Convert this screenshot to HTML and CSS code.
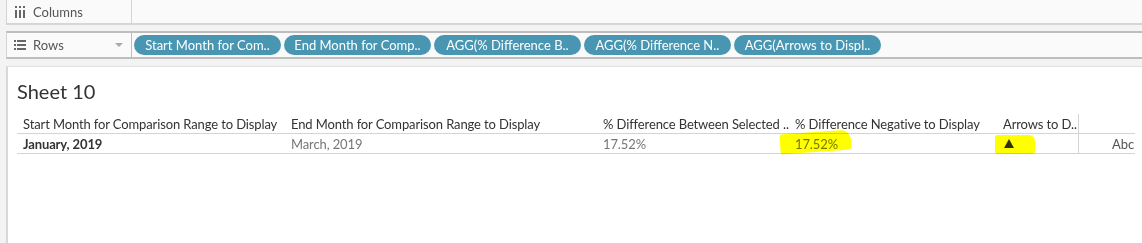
FILE: index.html
```html
<!DOCTYPE html>
<html lang="en">
<head>
  <meta charset="UTF-8" />
  <title>Sheet 10</title>
  <link rel="stylesheet" href="styles.css">
</head>
<body>
  <div class="shelf shelf-columns">
    <div class="shelf-label">
      <svg class="shelf-icon" width="12" height="12" viewBox="0 0 12 12">
        <rect x="1" y="0" width="2" height="2" fill="#666"/>
        <rect x="5" y="0" width="2" height="2" fill="#666"/>
        <rect x="9" y="0" width="2" height="2" fill="#666"/>
        <rect x="1" y="4" width="2" height="8" fill="#666"/>
        <rect x="5" y="4" width="2" height="8" fill="#666"/>
        <rect x="9" y="4" width="2" height="8" fill="#666"/>
      </svg>
      Columns
    </div>
    <div class="shelf-drop"></div>
  </div>

  <div class="shelf shelf-rows">
    <div class="shelf-label">
      <svg class="shelf-icon" width="12" height="12" viewBox="0 0 12 12">
        <rect x="0" y="1" width="2" height="2" fill="#666"/>
        <rect x="0" y="5" width="2" height="2" fill="#666"/>
        <rect x="0" y="9" width="2" height="2" fill="#666"/>
        <rect x="3" y="1" width="9" height="2" fill="#666"/>
        <rect x="3" y="5" width="9" height="2" fill="#666"/>
        <rect x="3" y="9" width="9" height="2" fill="#666"/>
      </svg>
      Rows
      <span class="caret"></span>
    </div>
    <div class="shelf-drop">
      <span class="pill">Start Month for Com..</span>
      <span class="pill">End Month for Comp..</span>
      <span class="pill">AGG(% Difference B..</span>
      <span class="pill">AGG(% Difference N..</span>
      <span class="pill">AGG(Arrows to Displ..</span>
    </div>
  </div>

  <div class="sheet">
    <h1 class="sheet-title">Sheet 10</h1>
    <div class="viz">
      <div class="row head">
        <div class="cell c1">Start Month for Comparison Range to Display</div>
        <div class="cell c2">End Month for Comparison Range to Display</div>
        <div class="cell c3">% Difference Between Selected ..</div>
        <div class="cell c4">% Difference Negative to Display</div>
        <div class="cell c5">Arrows to D..</div>
        <div class="cell c6 split"></div>
      </div>
      <div class="row data">
        <div class="cell c1 strong">January, 2019</div>
        <div class="cell c2">March, 2019</div>
        <div class="cell c3">17.52%</div>
        <div class="cell c4">17.52%<span class="marker marker-wide"></span></div>
        <div class="cell c5 arrow">
          <svg class="tri" width="10" height="9" viewBox="0 0 10 9"><polygon points="5,0 10,9 0,9" fill="#333"/></svg>
          <span class="marker marker-small"></span>
        </div>
        <div class="cell c6 split abc">Abc</div>
      </div>
    </div>
  </div>
</body>
</html>
```

FILE: styles.css
```css
* {
  box-sizing: border-box;
}
body {
  margin: 0;
  background: #f3f3f3;
  font-family: Lato, 'Open Sans', sans-serif;
  color: #333;
  height: 243px;
  overflow: hidden;
}

/* Shelves */
.shelf {
  display: flex;
  margin-left: 6px;
  background: #fafafa;
  border-left: 1px solid #d4d4d4;
}
.shelf-columns {
  height: 25px;
  border-bottom: 2px solid #d6d6d6;
}
.shelf-rows {
  margin-top: 6px;
  height: 28px;
  border-top: 2px solid #bdbdbd;
  border-bottom: 2px solid #bdbdbd;
}
.shelf-label {
  width: 125px;
  flex: none;
  display: flex;
  align-items: center;
  gap: 7px;
  padding-left: 7px;
  font-size: 13px;
  color: #555;
  border-right: 1px solid #d4d4d4;
}
.shelf-rows .shelf-label {
  border-right-color: #bdbdbd;
}
.shelf-icon {
  flex: none;
}
.caret {
  margin-left: auto;
  margin-right: 8px;
  width: 0;
  height: 0;
  border-left: 4px solid transparent;
  border-right: 4px solid transparent;
  border-top: 4px solid #aaa;
}
.shelf-drop {
  flex: 1;
  display: flex;
  align-items: center;
  gap: 3px;
  padding-left: 2px;
}
.pill {
  width: 147px;
  height: 20px;
  border-radius: 10px;
  background: #4996b2;
  color: #fff;
  font-size: 13px;
  line-height: 20px;
  text-align: center;
  white-space: nowrap;
}

/* Sheet */
.sheet {
  margin: 7px 0 0 6px;
  height: 178px;
  background: #fff;
  border-left: 2px solid #d8d8d8;
  border-top: 1px solid #e0e0e0;
  padding: 12px 0 0 9px;
}
.sheet-title {
  margin: 0;
  font-size: 20px;
  font-weight: 400;
  line-height: 24px;
  color: #333;
}
.viz {
  margin-top: 11px;
  width: 1118px;
}
.row {
  display: flex;
  height: 20px;
  border-bottom: 1px solid #d4d4d4;
}
.cell {
  font-size: 13px;
  letter-spacing: -0.12px;
  line-height: 20px;
  padding-left: 6px;
  white-space: nowrap;
  position: relative;
  color: #777;
}
.head .cell {
  color: #333;
}
.c1 { width: 268px; }
.c2 { width: 312px; }
.c3 { width: 192px; }
.c4 { width: 208px; }
.c5 { width: 81px; }
.c6 { width: 57px; }
.split {
  border-left: 1px solid #d4d4d4;
}
.strong {
  color: #333;
  font-weight: 700;
}
.arrow {
  display: flex;
  align-items: center;
  padding-left: 7px;
}
.tri {
  display: block;
}
.abc {
  color: #555;
  text-align: right;
  padding-right: 1px;
}

/* yellow highlighter marks over the values */
.marker {
  position: absolute;
  background: #ffff00;
  mix-blend-mode: multiply;
}
.marker-wide {
  left: -9px;
  top: -2px;
  width: 71px;
  height: 20px;
  border-radius: 3px 10px 4px 2px;
  transform: rotate(-4deg);
}
.marker-small {
  left: -2px;
  top: 1px;
  width: 40px;
  height: 19px;
  border-radius: 2px 6px 3px 2px;
}
```
